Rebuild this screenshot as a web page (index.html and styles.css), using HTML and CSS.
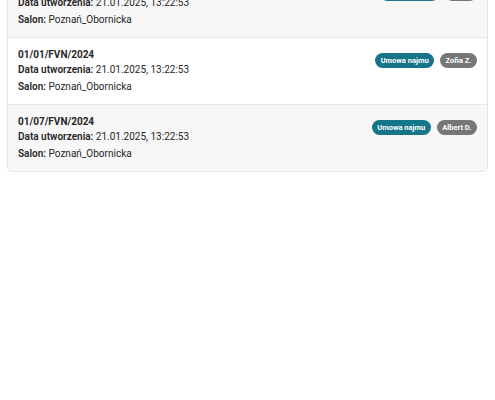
FILE: index.html
```html
<!DOCTYPE html>
<html lang="pl">
<head>
<meta charset="UTF-8" />
<meta name="viewport" content="width=device-width, initial-scale=1" />
<title>Dokumenty</title>
<link rel="stylesheet" href="styles.css">
</head>
<body>

<div class="doc-list">
  <div class="doc-item">
    <div class="doc-info">
      <div class="doc-number">01/02/FVN/2024</div>
      <div><b>Data utworzenia:</b> 21.01.2025, 13:22:53</div>
      <div class="doc-salon"><b>Salon:</b> Poznań_Obornicka</div>
    </div>
    <div class="doc-tags">
      <span class="tag tag-type">Umowa najmu</span>
      <span class="tag tag-user">Jan K.</span>
    </div>
  </div>

  <div class="doc-item">
    <div class="doc-info">
      <div class="doc-number">01/01/FVN/2024</div>
      <div><b>Data utworzenia:</b> 21.01.2025, 13:22:53</div>
      <div class="doc-salon"><b>Salon:</b> Poznań_Obornicka</div>
    </div>
    <div class="doc-tags">
      <span class="tag tag-type">Umowa najmu</span>
      <span class="tag tag-user">Zofia Z.</span>
    </div>
  </div>

  <div class="doc-item">
    <div class="doc-info">
      <div class="doc-number">01/07/FVN/2024</div>
      <div><b>Data utworzenia:</b> 21.01.2025, 13:22:53</div>
      <div class="doc-salon"><b>Salon:</b> Poznań_Obornicka</div>
    </div>
    <div class="doc-tags">
      <span class="tag tag-type">Umowa najmu</span>
      <span class="tag tag-user">Albert D.</span>
    </div>
  </div>
</div>

</body>
</html>
```

FILE: styles.css
```css
body {
  margin: 0;
  padding: 0 7px;
  font-family: Roboto, "Liberation Sans", sans-serif;
  font-size: 10px;
  color: #262626;
  background: #fff;
}
.doc-list {
  margin-top: -30px;
  border: 1px solid #e6e6e6;
  border-radius: 5px;
  overflow: hidden;
}
.doc-item {
  display: flex;
  justify-content: space-between;
  align-items: flex-start;
  padding: 9px 10px 10px 10px;
  border-top: 1px solid #e6e6e6;
  line-height: 15px;
}
.doc-item:first-child {
  border-top: none;
}
.doc-item:nth-child(odd) {
  background: #f7f7f7;
}
.doc-number {
  font-weight: bold;
}
.doc-info b {
  font-weight: 600;
}
.doc-salon {
  margin-top: 2px;
}
.doc-tags {
  display: flex;
  gap: 6px;
  margin-top: 6px;
}
.tag {
  display: inline-block;
  padding: 0 5.5px;
  height: 15px;
  line-height: 15px;
  border-radius: 8px;
  font-size: 7.5px;
  font-weight: bold;
  color: #fff;
}
.tag-type {
  background: #17758a;
}
.tag-user {
  background: #777;
}
```
